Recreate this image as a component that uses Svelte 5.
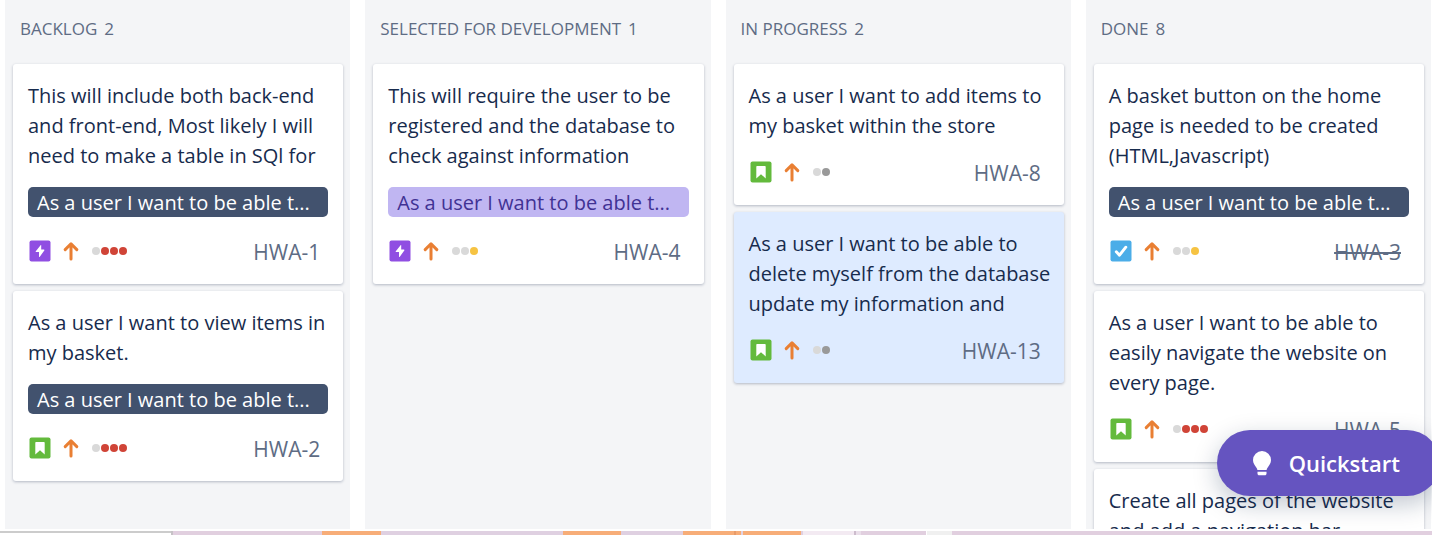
<script>
  const epic = 'As a user I want to be able t...';
  const columns = [
    {
      title: 'BACKLOG', count: 2,
      cards: [
        { lines: ['This will include both back-end', 'and front-end, Most likely I will', 'need to make a table in SQl for'], tag: 'navy', type: 'epic', dots: ['idle', 'red', 'red', 'red'], id: 'HWA-1' },
        { lines: ['As a user I want to view items in', 'my basket.'], tag: 'navy', type: 'story', dots: ['idle', 'red', 'red', 'red'], id: 'HWA-2' }
      ]
    },
    {
      title: 'SELECTED FOR DEVELOPMENT', count: 1,
      cards: [
        { lines: ['This will require the user to be', 'registered and the database to', 'check against information'], tag: 'lilac', type: 'epic', dots: ['idle', 'idle', 'yellow'], id: 'HWA-4' }
      ]
    },
    {
      title: 'IN PROGRESS', count: 2,
      cards: [
        { lines: ['As a user I want to add items to', 'my basket within the store'], type: 'story', dots: ['idle', 'grey'], id: 'HWA-8' },
        { lines: ['As a user I want to be able to', 'delete myself from the database', 'update my information and'], type: 'story', dots: ['idle', 'grey'], id: 'HWA-13', selected: true }
      ]
    },
    {
      title: 'DONE', count: 8,
      cards: [
        { lines: ['A basket button on the home', 'page is needed to be created', '(HTML,Javascript)'], tag: 'navy', type: 'task', dots: ['idle', 'idle', 'yellow'], id: 'HWA-3', done: true },
        { lines: ['As a user I want to be able to', 'easily navigate the website on', 'every page.'], type: 'story', dots: ['idle', 'red', 'red', 'red'], id: 'HWA-5', done: true },
        { lines: ['Create all pages of the website', 'and add a navigation bar'] }
      ]
    }
  ];
</script>

<div class="page">
  <main class="board">
    {#each columns as column}
      <section class="column">
        <h2>{column.title}<span>{column.count}</span></h2>
        <div class="cards">
          {#each column.cards as card}
            <article class="card" class:selected={card.selected}>
              <p>{#each card.lines as line}<span class="line">{line}</span>{/each}</p>
              {#if card.tag}
                <div class="tag {card.tag}">{epic}</div>
              {/if}
              {#if card.id}
                <footer>
                  <div class="icons">
                    <svg class="type" viewBox="0 0 22 22" aria-hidden="true">
                      {#if card.type === 'epic'}
                        <rect x="0.5" y="0.5" width="21" height="21" rx="2" fill="#904ee2" />
                        <path d="M11.6 5.2 6.8 11.2c-.3.5-.1.9.4.9H10v4.3c0 .6.5.7.8.3l4.5-6.2c.3-.5.1-.9-.4-.9h-2.7V5.4c0-.5-.3-.6-.6-.2Z" fill="#fff" />
                      {:else if card.type === 'story'}
                        <rect x="0.5" y="0.5" width="21" height="21" rx="2" fill="#63ba3c" />
                        <path d="M7.300 5h7.400c.6 0 1 .4 1 1v11.400L11 13.200l-4.700 4.200V6c0-.6.4-1 1-1Z" fill="#fff" />
                      {:else}
                        <rect x="0.5" y="0.5" width="21" height="21" rx="2" fill="#4bade8" />
                        <path d="m6.300 11.800 3.200 3.400 6.300-8" fill="none" stroke="#fff" stroke-width="2.900" stroke-linecap="round" stroke-linejoin="round" />
                      {/if}
                    </svg>
                    <svg class="priority" viewBox="0 0 16 20" aria-hidden="true">
                      <path d="M8 18V3M2.200 8.600 8 2.800l5.800 5.800" fill="none" stroke="#e97f33" stroke-width="3" stroke-linecap="round" stroke-linejoin="round" />
                    </svg>
                    <span class="dots">
                      {#each card.dots as dot}<i class={dot}></i>{/each}
                    </span>
                  </div>
                  <a class="key" class:done={card.done} href="#{card.id}">{card.id}</a>
                </footer>
              {/if}
            </article>
          {/each}
        </div>
      </section>
    {/each}
  </main>
  <div class="strip"></div>
  <button class="quickstart" type="button">
    <svg viewBox="0 0 18 25" aria-hidden="true">
      <path d="M9 0a9 9 0 0 0-9 9c0 3.200 1.700 5.300 3.300 7.400.7.900.9 1.700 1.100 2.600h9.200c.2-.9.400-1.700 1.100-2.600C16.300 14.300 18 12.200 18 9a9 9 0 0 0-9-9Z" fill="#fff" />
      <path d="M4.500 20.800h9v1.600c0 1-.7 1.900-1.700 1.900H6.200c-1 0-1.700-.9-1.700-1.900Z" fill="#fff" />
    </svg>
    Quickstart
  </button>
</div>

<style>
  :global(body) {
    background: #fff;
  }

  .page {
    display: flex;
    flex-direction: column;
    height: 100vh;
    overflow: hidden;
    position: relative;
    font-family: 'Segoe UI', 'Open Sans', 'Noto Sans', sans-serif;
    color: #172b4d;
  }

  .board {
    flex: 1;
    min-height: 0;
    display: grid;
    grid-template-columns: repeat(4, minmax(0, 1fr));
    grid-template-rows: minmax(0, 1fr);
    gap: 15px;
    padding: 0 1px 2px 5px;
  }

  .column {
    background: #f4f5f7;
    padding: 0 7px 0 8px;
    overflow: hidden;
  }

  h2 {
    margin: 0;
    padding: 17px 7px 23px;
    font-size: 17px;
    line-height: 24px;
    font-weight: 400;
    color: #5e6c84;
    white-space: nowrap;
  }

  h2 span {
    margin-left: 7px;
  }

  .cards {
    display: flex;
    flex-direction: column;
    gap: 7px;
  }

  .card {
    padding: 17px 15px;
    background: #fff;
    border-radius: 3px;
    box-shadow: 0 1px 3px rgba(9, 30, 66, 0.28);
  }

  .card.selected {
    background: #deebff;
  }

  p {
    margin: 0;
    font-size: 20px;
    line-height: 30px;
  }

  .line {
    display: block;
    white-space: nowrap;
  }

  .tag {
    margin: 16px 0 20px;
    padding: 2px 9px 0;
    border-radius: 5px;
    font-size: 20px;
    line-height: 28px;
    white-space: nowrap;
    overflow: hidden;
  }

  .navy {
    background: #42526e;
    color: #fff;
  }

  .lilac {
    background: #c0b6f2;
    color: #403294;
  }

  footer {
    display: flex;
    align-items: center;
    justify-content: space-between;
    height: 30px;
    padding: 0 8px 0 1px;
  }

  p + footer {
    margin-top: 17px;
  }

  .icons {
    display: flex;
    align-items: center;
    padding-bottom: 2px;
  }

  .type {
    width: 22px;
    height: 22px;
  }

  .priority {
    width: 16px;
    height: 20px;
    margin-left: 12px;
  }

  .dots {
    display: flex;
    gap: 1px;
    margin-left: 13px;
  }

  .dots i {
    width: 8px;
    height: 8px;
    border-radius: 50%;
  }

  .idle {
    background: #d9d9d9;
  }

  .red {
    background: #d04437;
  }

  .yellow {
    background: #f6c342;
  }

  .grey {
    background: #999;
  }

  .key {
    font-size: 21px;
    line-height: 30px;
    color: #5e6c84;
    text-decoration: none;
  }

  .key.done {
    text-decoration: line-through;
  }

  .strip {
    height: 4px;
    background:
      linear-gradient(#ccc, #ccc) 0 0 / 171px 2px no-repeat,
      linear-gradient(
        90deg,
        #fff 171px, #c6c2c6 171px 173px, #e1cfdf 173px 322px, #f7ad78 322px 381px,
        #dfd0e1 381px 563px, #f7ad78 563px 621px, #dfd0e1 621px 683px, #f7ad78 683px 734px,
        #e89b69 734px 736px, #f7ad78 736px 741px, #e0d2e3 741px 743px, #f7ad78 743px 801px,
        #dfd0e1 801px 803px, #f3eaf2 803px 854px, #cdbccd 854px 856px, #eadfea 856px 861px,
        #e1cfdf 861px 926px, #fff 926px 927px, #f0f0f0 927px 952px, #e1cfdf 952px
      );
  }

  .quickstart {
    position: absolute;
    right: -8px;
    bottom: 39px;
    display: flex;
    align-items: center;
    gap: 18px;
    height: 66px;
    padding: 0 40px 0 36px;
    border: 0;
    border-radius: 33px;
    background: #6554c0;
    color: #fff;
    font-family: inherit;
    font-size: 22px;
    font-weight: 600;
    box-shadow: 0 8px 24px rgba(9, 30, 66, 0.25);
  }

  .quickstart svg {
    width: 18px;
    height: 25px;
  }
</style>
